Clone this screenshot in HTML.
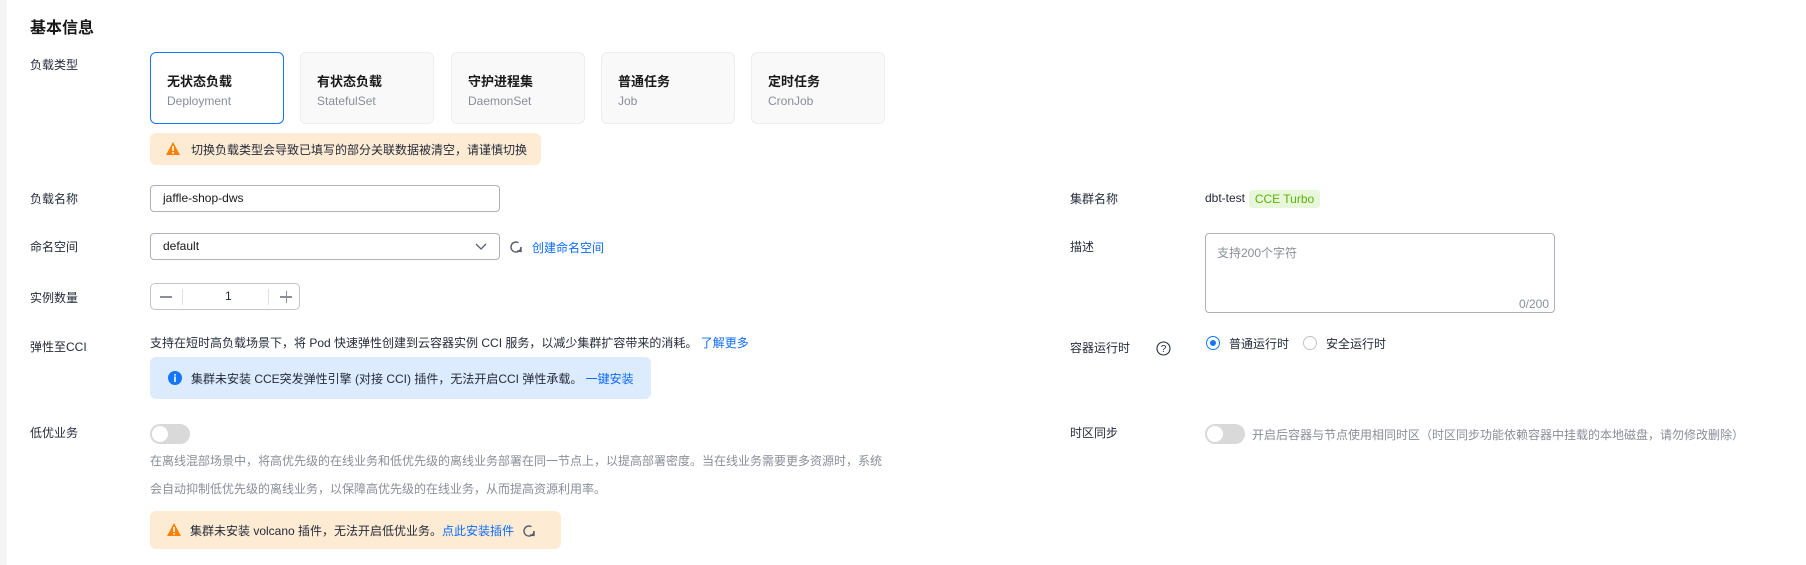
<!DOCTYPE html>
<html><head><meta charset="utf-8"><style>
*{box-sizing:border-box;margin:0;padding:0}
body{width:1806px;height:565px;background:#fff;position:relative;overflow:hidden;font-family:"Liberation Sans","Noto Sans CJK SC",sans-serif;font-size:12px;color:#252b3a}
.a{position:absolute;white-space:nowrap}
.strip{position:absolute;left:0;top:0;width:7px;height:565px;background:#f5f5f6}
.lbl{position:absolute;left:30px;font-size:12px;color:#252b3a;line-height:16px}
.rl{position:absolute;left:1070px;font-size:12px;line-height:16px}
.card{position:absolute;top:52px;width:134px;height:72px;border:1px solid #eceef0;border-radius:6px;background:#f9f9f9;padding:0 0 0 16px}
.card.sel{border-color:#1476ff;background:#fff}
.card b{position:absolute;left:16px;top:18px;font-size:13px;font-weight:bold;color:#191919}
.card span{position:absolute;left:16px;top:41px;font-size:12px;color:#8a8e99}
.inp{position:absolute;left:150px;width:350px;height:27px;border:1px solid #adb0b8;border-radius:4px;padding-left:12px;line-height:25px;font-size:12px;color:#191919}
.warn{position:absolute;background:#fdebd3;border-radius:6px}
.blue{color:#0d6bff}
.tog{position:absolute;width:40px;height:20px;border-radius:10px;background:#d9d9d9}
.tog:after{content:"";position:absolute;left:2px;top:2px;width:16px;height:16px;border-radius:50%;background:#fff}
</style></head><body>
<div class="strip"></div>
<div class="a" style="left:30px;top:14px;font-size:16px;font-weight:bold;color:#191919">基本信息</div>

<div class="lbl" style="top:57px">负载类型</div>
<div class="card sel" style="left:150px"><b>无状态负载</b><span>Deployment</span></div>
<div class="card" style="left:300px"><b>有状态负载</b><span>StatefulSet</span></div>
<div class="card" style="left:451px"><b>守护进程集</b><span>DaemonSet</span></div>
<div class="card" style="left:601px"><b>普通任务</b><span>Job</span></div>
<div class="card" style="left:751px"><b>定时任务</b><span>CronJob</span></div>

<div class="warn" style="left:150px;top:133px;width:391px;height:32px">
<svg class="a" style="left:16px;top:9px" width="14" height="13" viewBox="0 0 14 13"><path d="M7 0L14 13H0Z" fill="#ff8000"/><rect x="6.2" y="4" width="1.6" height="5" fill="#fff"/><rect x="6.2" y="10" width="1.6" height="1.6" fill="#fff"/></svg>
<div class="a" style="left:41px;top:8px">切换负载类型会导致已填写的部分关联数据被清空，请谨慎切换</div></div>

<div class="lbl" style="top:191px">负载名称</div>
<div class="inp" style="top:185px">jaffle-shop-dws</div>

<div class="lbl" style="top:239px">命名空间</div>
<div class="inp" style="top:233px">default
<svg class="a" style="left:324px;top:9px" width="12" height="8" viewBox="0 0 12 8"><path d="M1 1L6 6L11 1" fill="none" stroke="#575d6c" stroke-width="1.3"/></svg></div>
<svg class="a" style="left:509px;top:240px" width="14" height="14" viewBox="0 0 14 14"><path d="M12 7A5 5 0 1 1 9.5 2.7" fill="none" stroke="#575d6c" stroke-width="1.4"/><path d="M12 7L12 11.5L8 11" fill="none" stroke="#575d6c" stroke-width="1.4"/></svg>
<div class="a blue" style="left:532px;top:239px">创建命名空间</div>

<div class="lbl" style="top:290px">实例数量</div>
<div class="a" style="left:150px;top:283px;width:150px;height:27px;border:1px solid #c2c4c9;border-radius:5px">
<div class="a" style="left:9px;top:12px;width:12px;height:1.5px;background:#8a8e99"></div>
<div class="a" style="left:31px;top:5px;width:1px;height:16px;background:#dfe1e6"></div>
<div class="a" style="left:74px;top:5px;font-size:12px">1</div>
<div class="a" style="left:117px;top:5px;width:1px;height:16px;background:#dfe1e6"></div>
<div class="a" style="left:129px;top:12px;width:12px;height:1.5px;background:#8a8e99"></div>
<div class="a" style="left:134.5px;top:6.5px;width:1.5px;height:12px;background:#8a8e99"></div></div>

<div class="lbl" style="top:339px">弹性至CCI</div>
<div class="a" style="left:150px;top:334px">支持在短时高负载场景下，将 Pod 快速弹性创建到云容器实例 CCI 服务，以减少集群扩容带来的消耗。 <span class="blue">了解更多</span></div>
<div class="a" style="left:150px;top:357px;width:501px;height:42px;background:#dcebfd;border-radius:6px">
<svg class="a" style="left:18px;top:14px" width="14" height="14" viewBox="0 0 14 14"><circle cx="7" cy="7" r="7" fill="#1476ff"/><rect x="6.2" y="3" width="1.6" height="1.6" fill="#fff"/><rect x="6.2" y="5.5" width="1.6" height="5.5" fill="#fff"/></svg>
<div class="a" style="left:41px;top:13px">集群未安装 CCE突发弹性引擎 (对接 CCI) 插件，无法开启CCI 弹性承载。 <span class="blue">一键安装</span></div></div>

<div class="lbl" style="top:425px">低优业务</div>
<div class="tog" style="left:150px;top:424px"></div>
<div class="a" style="left:150px;top:453px;color:#8a8e99;line-height:16px">在离线混部场景中，将高优先级的在线业务和低优先级的离线业务部署在同一节点上，以提高部署密度。当在线业务需要更多资源时，系统</div>
<div class="a" style="left:150px;top:481px;color:#8a8e99;line-height:16px">会自动抑制低优先级的离线业务，以保障高优先级的在线业务，从而提高资源利用率。</div>
<div class="warn" style="left:150px;top:511px;width:411px;height:38px">
<svg class="a" style="left:17px;top:12px" width="14" height="13" viewBox="0 0 14 13"><path d="M7 0L14 13H0Z" fill="#ff8000"/><rect x="6.2" y="4" width="1.6" height="5" fill="#fff"/><rect x="6.2" y="10" width="1.6" height="1.6" fill="#fff"/></svg>
<div class="a" style="left:40px;top:11px">集群未安装 volcano 插件，无法开启低优业务。<span class="blue">点此安装插件</span></div>
<svg class="a" style="left:372px;top:13px" width="14" height="14" viewBox="0 0 14 14"><path d="M12 7A5 5 0 1 1 9.5 2.7" fill="none" stroke="#575d6c" stroke-width="1.4"/><path d="M12 7L12 11.5L8 11" fill="none" stroke="#575d6c" stroke-width="1.4"/></svg></div>

<!-- right -->
<div class="rl" style="top:191px">集群名称</div>
<div class="a" style="left:1205px;top:191px">dbt-test</div>
<div class="a" style="left:1249px;top:190px;width:71px;height:18px;background:#e8f7dc;border-radius:3px;color:#5cb300;text-align:center;line-height:18px">CCE Turbo</div>

<div class="rl" style="top:239px">描述</div>
<div class="a" style="left:1205px;top:233px;width:350px;height:80px;border:1px solid #adb0b8;border-radius:4px">
<div class="a" style="left:11px;top:10px;color:#8a8e99">支持200个字符</div>
<div class="a" style="right:5px;top:63px;color:#8a8e99">0/200</div></div>

<div class="rl" style="top:340px">容器运行时</div>
<svg class="a" style="left:1156px;top:341px" width="15" height="15" viewBox="0 0 15 15"><circle cx="7.5" cy="7.5" r="6.5" fill="none" stroke="#252b3a" stroke-width="1.1"/><text x="7.5" y="11" font-size="10" text-anchor="middle" fill="#252b3a" font-family="Liberation Sans">?</text></svg>
<div class="a" style="left:1206px;top:336px;width:14px;height:14px;border-radius:50%;border:1px solid #1476ff"><div class="a" style="left:3px;top:3px;width:6px;height:6px;border-radius:50%;background:#1476ff"></div></div>
<div class="a" style="left:1229px;top:335px">普通运行时</div>
<div class="a" style="left:1303px;top:336px;width:14px;height:14px;border-radius:50%;border:1px solid #c2c4c9"></div>
<div class="a" style="left:1326px;top:335px">安全运行时</div>

<div class="rl" style="top:425px">时区同步</div>
<div class="tog" style="left:1205px;top:424px"></div>
<div class="a" style="left:1252px;top:426px;color:#8a8e99">开启后容器与节点使用相同时区（时区同步功能依赖容器中挂载的本地磁盘，请勿修改删除）</div>
</body></html>
